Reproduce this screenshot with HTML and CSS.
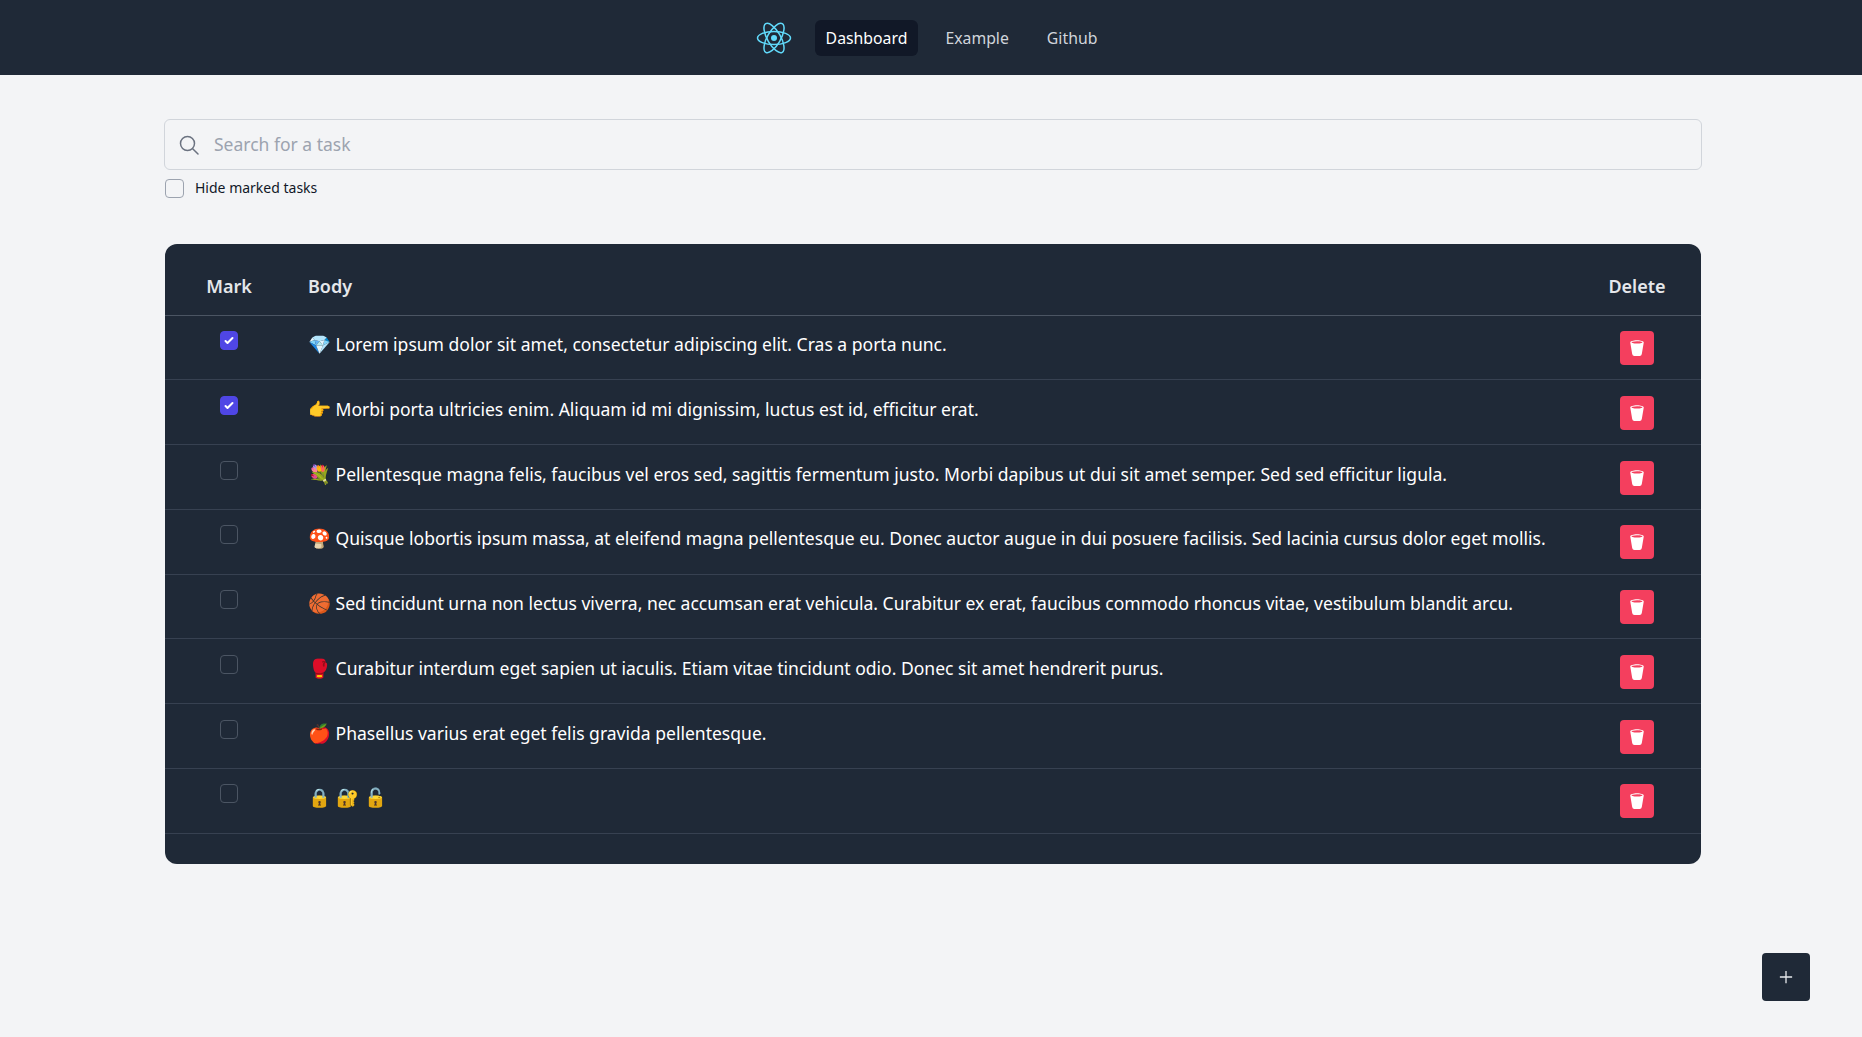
FILE: index.html
```html
<!DOCTYPE html>
<html lang="en">
<head>
    <meta charset="UTF-8">
    <meta name="viewport" content="width=device-width, initial-scale=1.0">
    <title>Dashboard</title>
    <link rel="stylesheet" href="styles.css">
</head>
<body>
    <nav class="navbar">
        <svg class="logo" viewBox="0 0 36 36" fill="none" stroke="#61dafb" stroke-width="1.5">
            <circle cx="18" cy="18" r="3" fill="#61dafb" stroke="none"/>
            <ellipse cx="18" cy="18" rx="16.5" ry="6.6"/>
            <ellipse cx="18" cy="18" rx="16.5" ry="6.6" transform="rotate(60 18 18)"/>
            <ellipse cx="18" cy="18" rx="16.5" ry="6.6" transform="rotate(120 18 18)"/>
        </svg>
        <a class="nav-link active" href="#">Dashboard</a>
        <a class="nav-link" href="#">Example</a>
        <a class="nav-link" href="#">Github</a>
    </nav>

    <main class="container">
        <div class="search-box">
            <svg class="search-icon" viewBox="0 0 20 20" fill="none" stroke="#6b7280" stroke-width="1.5" stroke-linecap="round">
                <circle cx="8.5" cy="8.5" r="7"/>
                <path d="M13.7 13.7 19 19"/>
            </svg>
            <input class="search-input" type="text" placeholder="Search for a task">
        </div>
        <label class="hide-marked">
            <input class="check" type="checkbox">
            <span>Hide marked tasks</span>
        </label>

        <div class="table-card">
            <table class="task-table">
                <thead>
                    <tr>
                        <th class="col-mark">Mark</th>
                        <th class="col-body">Body</th>
                        <th class="col-delete">Delete</th>
                    </tr>
                </thead>
                <tbody>
                    <tr>
                        <td class="col-mark"><input class="check" type="checkbox" checked></td>
                        <td class="col-body"><span class="emoji">💎</span> Lorem ipsum dolor sit amet, consectetur adipiscing elit. Cras a porta nunc.</td>
                        <td class="col-delete"><button class="delete-btn"><svg viewBox="0 0 16 16" fill="#fff"><path d="M2.037 3.225A10.13 10.13 0 0 1 2 3c0-1.105 2.686-2 6-2s6 .895 6 2a10.13 10.13 0 0 1-.037.225l-1.684 10.104A2 2 0 0 1 10.305 15H5.694a2 2 0 0 1-1.973-1.671L2.037 3.225zm9.89-.69C10.966 2.214 9.578 2 8 2c-1.58 0-2.968.215-3.926.534-.477.16-.795.327-.975.466.18.14.498.307.975.466C5.032 3.786 6.42 4 8 4s2.967-.215 3.926-.534c.477-.16.795-.327.975-.466-.18-.14-.498-.307-.975-.466z"/></svg></button></td>
                    </tr>
                    <tr>
                        <td class="col-mark"><input class="check" type="checkbox" checked></td>
                        <td class="col-body"><span class="emoji">👉</span> Morbi porta ultricies enim. Aliquam id mi dignissim, luctus est id, efficitur erat.</td>
                        <td class="col-delete"><button class="delete-btn"><svg viewBox="0 0 16 16" fill="#fff"><path d="M2.037 3.225A10.13 10.13 0 0 1 2 3c0-1.105 2.686-2 6-2s6 .895 6 2a10.13 10.13 0 0 1-.037.225l-1.684 10.104A2 2 0 0 1 10.305 15H5.694a2 2 0 0 1-1.973-1.671L2.037 3.225zm9.89-.69C10.966 2.214 9.578 2 8 2c-1.58 0-2.968.215-3.926.534-.477.16-.795.327-.975.466.18.14.498.307.975.466C5.032 3.786 6.42 4 8 4s2.967-.215 3.926-.534c.477-.16.795-.327.975-.466-.18-.14-.498-.307-.975-.466z"/></svg></button></td>
                    </tr>
                    <tr>
                        <td class="col-mark"><input class="check" type="checkbox"></td>
                        <td class="col-body"><span class="emoji">💐</span> Pellentesque magna felis, faucibus vel eros sed, sagittis fermentum justo. Morbi dapibus ut dui sit amet semper. Sed sed efficitur ligula.</td>
                        <td class="col-delete"><button class="delete-btn"><svg viewBox="0 0 16 16" fill="#fff"><path d="M2.037 3.225A10.13 10.13 0 0 1 2 3c0-1.105 2.686-2 6-2s6 .895 6 2a10.13 10.13 0 0 1-.037.225l-1.684 10.104A2 2 0 0 1 10.305 15H5.694a2 2 0 0 1-1.973-1.671L2.037 3.225zm9.89-.69C10.966 2.214 9.578 2 8 2c-1.58 0-2.968.215-3.926.534-.477.16-.795.327-.975.466.18.14.498.307.975.466C5.032 3.786 6.42 4 8 4s2.967-.215 3.926-.534c.477-.16.795-.327.975-.466-.18-.14-.498-.307-.975-.466z"/></svg></button></td>
                    </tr>
                    <tr>
                        <td class="col-mark"><input class="check" type="checkbox"></td>
                        <td class="col-body"><span class="emoji">🍄</span> Quisque lobortis ipsum massa, at eleifend magna pellentesque eu. Donec auctor augue in dui posuere facilisis. Sed lacinia cursus dolor eget mollis.</td>
                        <td class="col-delete"><button class="delete-btn"><svg viewBox="0 0 16 16" fill="#fff"><path d="M2.037 3.225A10.13 10.13 0 0 1 2 3c0-1.105 2.686-2 6-2s6 .895 6 2a10.13 10.13 0 0 1-.037.225l-1.684 10.104A2 2 0 0 1 10.305 15H5.694a2 2 0 0 1-1.973-1.671L2.037 3.225zm9.89-.69C10.966 2.214 9.578 2 8 2c-1.58 0-2.968.215-3.926.534-.477.16-.795.327-.975.466.18.14.498.307.975.466C5.032 3.786 6.42 4 8 4s2.967-.215 3.926-.534c.477-.16.795-.327.975-.466-.18-.14-.498-.307-.975-.466z"/></svg></button></td>
                    </tr>
                    <tr>
                        <td class="col-mark"><input class="check" type="checkbox"></td>
                        <td class="col-body"><span class="emoji">🏀</span> Sed tincidunt urna non lectus viverra, nec accumsan erat vehicula. Curabitur ex erat, faucibus commodo rhoncus vitae, vestibulum blandit arcu.</td>
                        <td class="col-delete"><button class="delete-btn"><svg viewBox="0 0 16 16" fill="#fff"><path d="M2.037 3.225A10.13 10.13 0 0 1 2 3c0-1.105 2.686-2 6-2s6 .895 6 2a10.13 10.13 0 0 1-.037.225l-1.684 10.104A2 2 0 0 1 10.305 15H5.694a2 2 0 0 1-1.973-1.671L2.037 3.225zm9.89-.69C10.966 2.214 9.578 2 8 2c-1.58 0-2.968.215-3.926.534-.477.16-.795.327-.975.466.18.14.498.307.975.466C5.032 3.786 6.42 4 8 4s2.967-.215 3.926-.534c.477-.16.795-.327.975-.466-.18-.14-.498-.307-.975-.466z"/></svg></button></td>
                    </tr>
                    <tr>
                        <td class="col-mark"><input class="check" type="checkbox"></td>
                        <td class="col-body"><span class="emoji">🥊</span> Curabitur interdum eget sapien ut iaculis. Etiam vitae tincidunt odio. Donec sit amet hendrerit purus.</td>
                        <td class="col-delete"><button class="delete-btn"><svg viewBox="0 0 16 16" fill="#fff"><path d="M2.037 3.225A10.13 10.13 0 0 1 2 3c0-1.105 2.686-2 6-2s6 .895 6 2a10.13 10.13 0 0 1-.037.225l-1.684 10.104A2 2 0 0 1 10.305 15H5.694a2 2 0 0 1-1.973-1.671L2.037 3.225zm9.89-.69C10.966 2.214 9.578 2 8 2c-1.58 0-2.968.215-3.926.534-.477.16-.795.327-.975.466.18.14.498.307.975.466C5.032 3.786 6.42 4 8 4s2.967-.215 3.926-.534c.477-.16.795-.327.975-.466-.18-.14-.498-.307-.975-.466z"/></svg></button></td>
                    </tr>
                    <tr>
                        <td class="col-mark"><input class="check" type="checkbox"></td>
                        <td class="col-body"><span class="emoji">🍎</span> Phasellus varius erat eget felis gravida pellentesque.</td>
                        <td class="col-delete"><button class="delete-btn"><svg viewBox="0 0 16 16" fill="#fff"><path d="M2.037 3.225A10.13 10.13 0 0 1 2 3c0-1.105 2.686-2 6-2s6 .895 6 2a10.13 10.13 0 0 1-.037.225l-1.684 10.104A2 2 0 0 1 10.305 15H5.694a2 2 0 0 1-1.973-1.671L2.037 3.225zm9.89-.69C10.966 2.214 9.578 2 8 2c-1.58 0-2.968.215-3.926.534-.477.16-.795.327-.975.466.18.14.498.307.975.466C5.032 3.786 6.42 4 8 4s2.967-.215 3.926-.534c.477-.16.795-.327.975-.466-.18-.14-.498-.307-.975-.466z"/></svg></button></td>
                    </tr>
                    <tr>
                        <td class="col-mark"><input class="check" type="checkbox"></td>
                        <td class="col-body"><span class="emoji">🔒 🔐 🔓</span></td>
                        <td class="col-delete"><button class="delete-btn"><svg viewBox="0 0 16 16" fill="#fff"><path d="M2.037 3.225A10.13 10.13 0 0 1 2 3c0-1.105 2.686-2 6-2s6 .895 6 2a10.13 10.13 0 0 1-.037.225l-1.684 10.104A2 2 0 0 1 10.305 15H5.694a2 2 0 0 1-1.973-1.671L2.037 3.225zm9.89-.69C10.966 2.214 9.578 2 8 2c-1.58 0-2.968.215-3.926.534-.477.16-.795.327-.975.466.18.14.498.307.975.466C5.032 3.786 6.42 4 8 4s2.967-.215 3.926-.534c.477-.16.795-.327.975-.466-.18-.14-.498-.307-.975-.466z"/></svg></button></td>
                    </tr>
                </tbody>
            </table>
        </div>
    </main>

    <button class="add-btn">
        <svg viewBox="0 0 16 16" fill="none" stroke="#e5e7eb" stroke-width="1.5"><path d="M8 1v14M1 8h14"/></svg>
    </button>
</body>
</html>
```

FILE: styles.css
```css
* {
    box-sizing: border-box;
}
body {
    font-family: "Noto Sans", "Open Sans", sans-serif;
    margin: 0;
    min-height: 1037px;
    background-color: #f3f4f6;
    color: #111827;
}
.navbar {
    height: 75px;
    padding-left: 2px;
    background-color: #1f2937;
    display: flex;
    align-items: center;
    justify-content: center;
    gap: 16px;
}
.logo {
    width: 36px;
    height: 36px;
    margin-right: 7px;
}
.nav-link {
    padding: 6px 11px;
    border-radius: 6px;
    color: #d1d5db;
    font-size: 15.8px;
    line-height: 24px;
    text-decoration: none;
}
.nav-link.active {
    background-color: #111827;
    color: #fff;
}
.container {
    width: 1536px;
    margin-left: 165px;
    padding-top: 44px;
}
.search-box {
    position: relative;
    margin: 0 -1px;
}
.search-icon {
    position: absolute;
    left: 15px;
    top: 16px;
    width: 20px;
    height: 20px;
}
.search-input {
    display: block;
    width: 100%;
    height: 51px;
    padding: 0 49px 1px;
    font-family: inherit;
    font-size: 17.5px;
    color: #111827;
    background-color: #f3f4f6;
    border: 1px solid #d1d5db;
    border-radius: 6px;
    outline: none;
}
.search-input::placeholder {
    color: #9ca3af;
}
.hide-marked {
    display: flex;
    align-items: center;
    gap: 11px;
    margin-top: 8px;
    font-size: 14px;
    line-height: 20px;
}
.check {
    appearance: none;
    display: block;
    width: 19px;
    height: 19px;
    margin: 0;
    border: 1px solid #9ca3af;
    border-radius: 4px;
    background-color: transparent;
}
.task-table .check {
    width: 18px;
    border-color: #4b5563;
    margin: 0 auto;
}
.check:checked,
.task-table .check:checked {
    background-color: #4f46e5;
    border-color: #4f46e5;
    background-image: url("data:image/svg+xml,%3Csvg viewBox='0 0 16 16' xmlns='http://www.w3.org/2000/svg' fill='%23fff'%3E%3Cpath d='M12.207 4.793a1 1 0 0 1 0 1.414l-5 5a1 1 0 0 1-1.414 0l-2-2a1 1 0 0 1 1.414-1.414L6.5 9.086l4.293-4.293a1 1 0 0 1 1.414 0z'/%3E%3C/svg%3E");
    background-size: 100% 100%;
}
.table-card {
    margin-top: 46px;
    height: 620px;
    padding-top: 11px;
    background-color: #1f2937;
    border-radius: 12px;
    overflow: hidden;
}
.task-table {
    width: 100%;
    border-collapse: collapse;
    color: #fff;
}
.task-table th {
    height: 60.2px;
    padding: 3px 0 0;
    color: #e5e7eb;
    font-size: 18px;
    font-weight: 600;
    text-align: left;
    border-bottom: 1px solid #4b5563;
}
.task-table td {
    height: 64.75px;
    padding: 15.5px 0 0;
    font-size: 17.55px;
    line-height: 26px;
    vertical-align: top;
    border-bottom: 1px solid #374151;
}
.task-table .col-mark {
    width: 143px;
    padding-right: 15px;
    text-align: center;
}
.task-table .col-delete {
    width: 128px;
    text-align: center;
}
.emoji {
    font-size: 18.5px;
}
.delete-btn {
    display: block;
    width: 34px;
    height: 34px;
    margin: 0 auto;
    padding: 8px;
    border: none;
    border-radius: 4px;
    background-color: #f43f5e;
}
.delete-btn svg {
    display: block;
    width: 18px;
    height: 18px;
}
.add-btn {
    position: fixed;
    right: 52px;
    bottom: 36px;
    width: 48px;
    height: 48px;
    padding: 17px;
    border: none;
    border-radius: 4px;
    background-color: #1f2937;
}
.add-btn svg {
    display: block;
    width: 14px;
    height: 14px;
}
```
